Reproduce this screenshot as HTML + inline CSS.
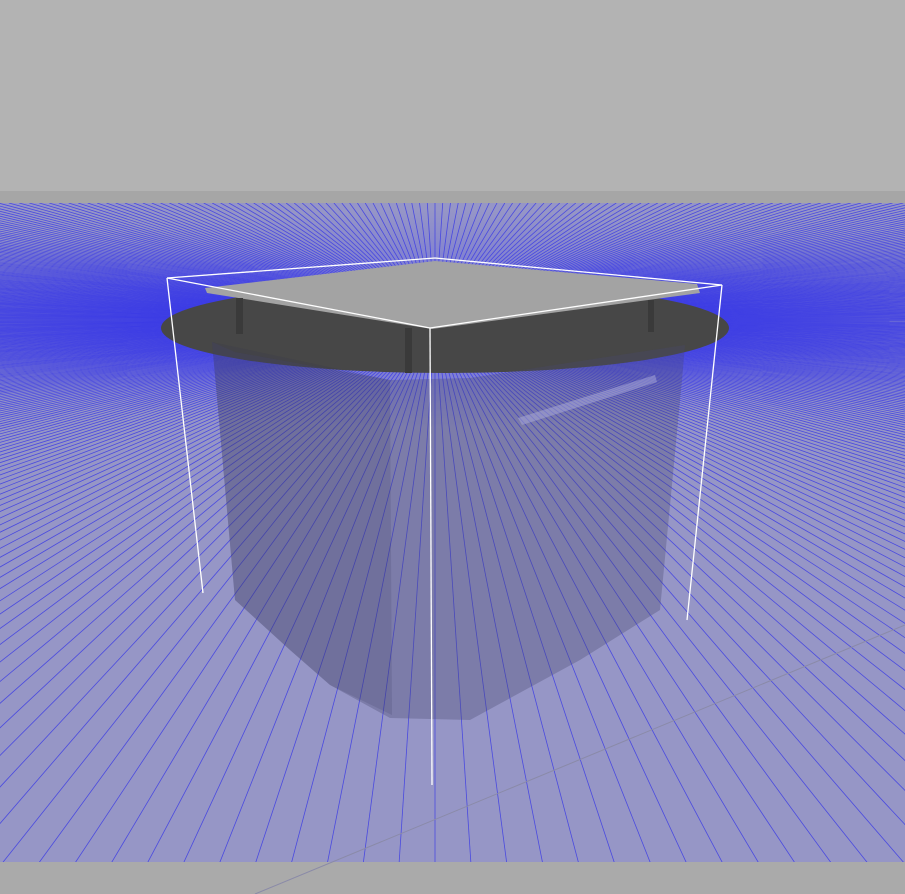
<!DOCTYPE html>
<html><head><style>
html,body{margin:0;padding:0;width:905px;height:894px;overflow:hidden;background:#b3b3b3;position:relative}
#plane{position:absolute;left:0;top:203px;width:905px;height:659px;
background:radial-gradient(ellipse 560px 110px at 435px 117px, #6a6ae0 0%, #8080d2 50%, #9696c6 100%);}
#band{position:absolute;left:0;top:191px;width:905px;height:12px;background:#a6a6a6}
#bot{position:absolute;left:0;top:862px;width:905px;height:32px;background:#aaaaaa}
svg{position:absolute;left:0;top:0;display:block}
</style></head><body>
<div id="band"></div>
<div id="plane"></div>
<div id="bot"></div>
<svg width="905" height="894" viewBox="0 0 905 894">
<defs><clipPath id="cp"><rect x="0" y="203" width="905" height="659"/></clipPath></defs>
<g id="grid" clip-path="url(#cp)" stroke="rgba(55,55,230,0.8)" stroke-width="0.8"></g>
<line x1="255" y1="894" x2="905" y2="625" stroke="#8a8aa8" stroke-width="1"/>
<ellipse cx="445" cy="328" rx="284" ry="45" fill="#474747"/>
<polygon points="212,342 235,352 390,380 470,378 685,345 682,380 660,610 580,660 470,720 390,718 330,685 290,650 235,600" fill="rgba(70,70,110,0.32)"/>
<polygon points="212,342 390,380 392,715 330,685 290,650 235,600" fill="rgba(40,40,80,0.14)"/>
<path d="M518 418 L655 375 L657 382 L522 425 Z" fill="rgba(170,170,220,0.5)"/>
<polygon points="205,288 435,261 697,284 700,293 432,329 207,293" fill="#a3a3a3"/>
<rect x="236" y="298" width="7" height="36" fill="#3a3a3a"/>
<rect x="405" y="328" width="7" height="45" fill="#3a3a3a"/>
<rect x="648" y="300" width="6" height="32" fill="#3a3a3a"/>
<g stroke="#ffffff" stroke-width="1.3" fill="none">
<polyline points="167,278 435,258 722,285 430,328 167,278"/>
<line x1="167" y1="278" x2="203" y2="593"/>
<line x1="430" y1="328" x2="432" y2="785"/>
<line x1="722" y1="285" x2="687" y2="620"/>
</g>
</svg>
<script>
(function(){
var g=document.getElementById('grid'),f=820,fh=130,hy=190,cx=435,s='';
for(var a=0;a<360;a+=0.6){
 var th=a*Math.PI/180,c=Math.cos(th),sn=Math.sin(th),t;
 if(sn>0.0001) t=Math.min(60,9/sn); else if(sn<-0.0001) t=Math.min(60,0.85/(-sn)); else t=60;
 var X=t*c,Z=1+t*sn;
 if(Z<0.15){Z=0.15;}
 var x=cx+f*X/Z,y=hy+fh/Z;
 s+='<line x1="435" y1="320" x2="'+x.toFixed(1)+'" y2="'+y.toFixed(1)+'"/>';
}
g.innerHTML=s;
})();
</script>
</body></html>
